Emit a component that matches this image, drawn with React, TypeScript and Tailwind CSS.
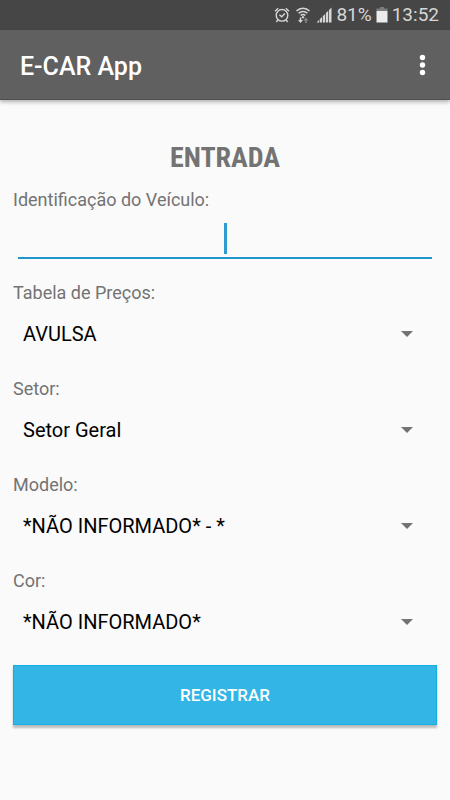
import { useState } from 'react'

const fields = [
  { id: 'tabela', label: 'Tabela de Preços:', options: ['AVULSA'] },
  { id: 'setor', label: 'Setor:', options: ['Setor Geral'] },
  { id: 'modelo', label: 'Modelo:', options: ['*NÃO INFORMADO* - *'] },
  { id: 'cor', label: 'Cor:', options: ['*NÃO INFORMADO*'] },
]

function AlarmIcon() {
  return (
    <svg className="h-4 w-4" viewBox="0 0 16 16" fill="none" stroke="currentColor" strokeWidth="1.4">
      <circle cx="8" cy="8.3" r="5.8" />
      <path d="M1 4.2 4.2 1.3M15 4.2 11.8 1.3M3.9 12.8 2.4 15M12.1 12.8l1.5 2.2M5.4 7.8l2.3 2 3.2-3.3" />
    </svg>
  )
}

function WifiIcon() {
  return (
    <svg className="h-4 w-4" viewBox="0 0 16 16" fill="none" stroke="currentColor" strokeWidth="1.6">
      <path d="M1.5 4C5.2.3 10.800.3 14.500 4M3.600 6.300c2.500-2.500 6.300-2.500 8.800 0M5.700 8.500c1.300-1.300 3.300-1.300 4.600 0" />
      <path d="M8 8.700 9.500 10.200 8 11.700 6.500 10.200z" fill="currentColor" stroke="none" />
      <path d="M4.700 10.600v2.400H3l2.500 2.900L8 13H6.300v-2.400z" fill="currentColor" stroke="none" />
      <path d="M10.100 15.900v-2.400H8.400l2.500-2.900 2.500 2.900h-1.700v2.400z" fill="#858585" stroke="none" />
    </svg>
  )
}

function SignalIcon() {
  return (
    <svg className="h-4 w-4" viewBox="0 0 16 16" fill="currentColor">
      <path d="M.5 15.5 3 13v2.500zM3.700 12.300 6 10v5.500H3.700zM6.800 9.200 9.100 6.900v8.600H6.800zM9.900 6.100l2.300-2.300v11.700H9.900zM13 3l2.500-2.500v15H13z" />
    </svg>
  )
}

function BatteryIcon() {
  return (
    <svg className="h-4 w-3" viewBox="0 0 12 16">
      <path d="M4 0h4v1.500h3.500V4H.5V1.500H4z" fill="#7c7c7c" />
      <path d="M.5 4h11v11.500H.5z" fill="#ececec" />
    </svg>
  )
}

function StatusBar() {
  return (
    <div className="flex h-[30px] items-center justify-end gap-1 bg-[#464646] pr-[11px] text-[19px] text-[#d6d6d6]">
      <div className="flex items-center gap-[5px]">
        <AlarmIcon />
        <WifiIcon />
        <SignalIcon />
      </div>
      <span>81%</span>
      <BatteryIcon />
      <span>13:52</span>
    </div>
  )
}

function AppBar() {
  return (
    <header className="flex h-[70px] items-center justify-between border-b border-[#505050] bg-[#606060] pr-3 pl-5 text-white shadow-[0_2px_4px_rgba(0,0,0,0.3)]">
      <h1 className="pt-1 text-[25px] font-medium">E-CAR App</h1>
      <button type="button" aria-label="Mais opções" className="flex h-10 w-8 items-center justify-center">
        <svg className="h-6 w-6" viewBox="0 0 24 24" fill="currentColor">
          <circle cx="12.5" cy="4.5" r="2.7" />
          <circle cx="12.5" cy="12" r="2.7" />
          <circle cx="12.5" cy="19.5" r="2.7" />
        </svg>
      </button>
    </header>
  )
}

type SelectFieldProps = { id: string; label: string; options: string[] }

function SelectField({ id, label, options }: SelectFieldProps) {
  return (
    <div className="mb-[14px]">
      <label htmlFor={id} className="block text-[18px] leading-6 text-[#737373]">
        {label}
      </label>
      <div className="relative">
        <select id={id} className="block h-[58px] w-full appearance-none bg-transparent pr-12 pl-[10px] text-[20px] text-black outline-none">
          {options.map((option) => (
            <option key={option}>{option}</option>
          ))}
        </select>
        <svg className="pointer-events-none absolute inset-y-0 right-6 my-auto h-[6px] w-3" viewBox="0 0 12 6" fill="#737373">
          <path d="M0 0h12L6 6z" />
        </svg>
      </div>
    </div>
  )
}

export default function App() {
  const [plate, setPlate] = useState('')

  return (
    <div className="min-h-screen bg-[#fafafa] font-['Roboto',sans-serif]">
      <StatusBar />
      <AppBar />
      <form className="px-[13px] pt-10 pb-10" onSubmit={(e) => e.preventDefault()}>
        <h2 className="mb-3 text-center font-['Roboto_Condensed','Roboto',sans-serif] text-[28px] leading-9 font-bold text-[#737373]">
          ENTRADA
        </h2>
        <label htmlFor="veiculo" className="block text-[18px] leading-6 text-[#737373]">
          Identificação do Veículo:
        </label>
        <div className="relative mx-[5px] mb-[22px]">
          <input
            id="veiculo"
            value={plate}
            onChange={(e) => setPlate(e.target.value)}
            className="block h-[47px] w-full border-b-2 border-[#2196cc] bg-transparent text-center text-[20px] caret-transparent outline-none"
          />
          {plate === '' && (
            <span className="pointer-events-none absolute inset-x-0 top-[11px] mx-auto h-[31px] w-[3px] bg-[#2f9bd0]" />
          )}
        </div>
        {fields.map((field) => (
          <SelectField key={field.id} {...field} />
        ))}
        <button
          type="submit"
          className="block h-[60px] w-full border border-[#0fafe6] bg-[#33b5e5] pt-[2px] text-[17px] font-medium text-white shadow-[0_3px_2px_rgba(0,0,0,0.25)]"
        >
          REGISTRAR
        </button>
      </form>
    </div>
  )
}
